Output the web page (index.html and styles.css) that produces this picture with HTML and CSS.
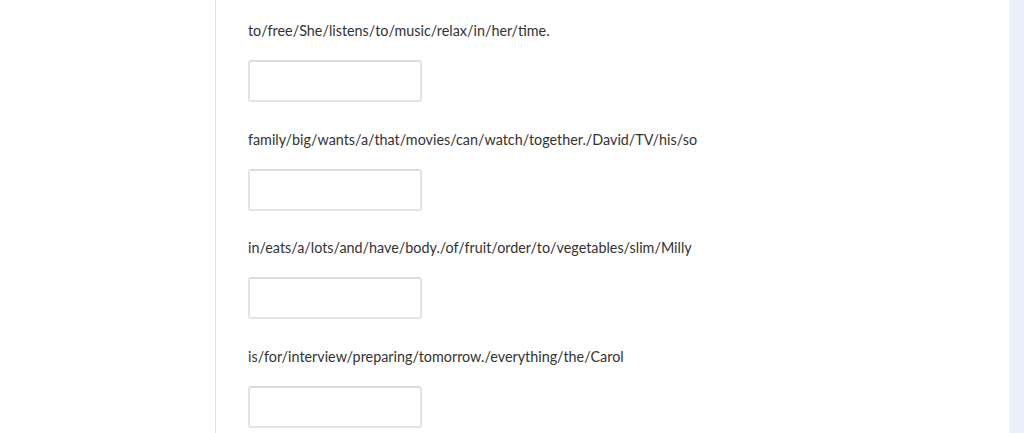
FILE: index.html
```html
<!DOCTYPE html>
<html lang="en">
<head>
    <meta charset="UTF-8">
    <meta name="viewport" content="width=device-width, initial-scale=1.0">
    <title>Sentence order</title>
    <link rel="stylesheet" href="styles.css">
</head>
<body>
    <div class="page">
        <div class="side"></div>
        <div class="main">
            <div class="question">
                <p class="prompt">to/free/She/listens/to/music/relax/in/her/time.</p>
                <input class="answer" type="text">
            </div>
            <div class="question">
                <p class="prompt">family/big/wants/a/that/movies/can/watch/together./David/TV/his/so</p>
                <input class="answer" type="text">
            </div>
            <div class="question">
                <p class="prompt">in/eats/a/lots/and/have/body./of/fruit/order/to/vegetables/slim/Milly</p>
                <input class="answer" type="text">
            </div>
            <div class="question">
                <p class="prompt">is/for/interview/preparing/tomorrow./everything/the/Carol</p>
                <input class="answer" type="text">
            </div>
        </div>
        <div class="strip"></div>
    </div>
</body>
</html>
```

FILE: styles.css
```css
body {
    margin: 0;
    padding: 0;
    font-family: Lato, "Open Sans", sans-serif;
    background-color: #ffffff;
    color: #333333;
    overflow: hidden;
}

.page {
    display: flex;
    height: 433px;
}

.side {
    width: 215px;
    flex-shrink: 0;
}

.main {
    flex: 1;
    border-left: 1px solid #e2e2e2;
    padding: 22px 0 0 32px;
    overflow: hidden;
}

.strip {
    width: 14px;
    flex-shrink: 0;
    background-color: #ebeff8;
    border-left: 1px solid #f0f1f3;
}

.question {
    height: 108.7px;
}

.prompt {
    margin: 0;
    font-size: 14.35px;
    line-height: 18px;
}

.answer {
    display: block;
    margin-top: 20px;
    width: 174px;
    height: 42px;
    box-sizing: border-box;
    border: 2px solid #e4e4e4;
    border-top-color: #dcdcdc;
    border-radius: 3px;
    background: #ffffff;
    padding: 0 8px;
}
```
